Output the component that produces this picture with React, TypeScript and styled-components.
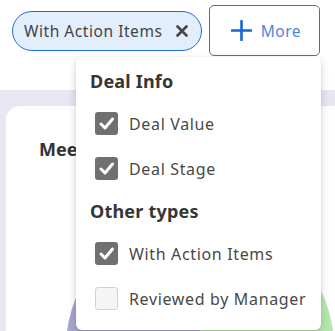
import React from "react";
import styled, { createGlobalStyle } from "styled-components";

const GlobalStyle = createGlobalStyle`
  html, body {
    margin: 0;
    padding: 0;
    background: #ffffff;
  }
  body {
    font-family: "Noto Sans", "Open Sans", sans-serif;
    color: #444444;
  }
`;

const Page = styled.div`
  position: relative;
  width: 335px;
  height: 331px;
  overflow: hidden;
  background: #ffffff;
`;

const Toolbar = styled.div`
  display: flex;
  align-items: center;
  gap: 7px;
  padding: 5px 0 0 12px;
  height: 51px;
`;

const Chip = styled.div`
  display: flex;
  align-items: center;
  height: 38px;
  padding: 0 13px 0 11px;
  border: 1px solid #1f6fd6;
  border-radius: 20px;
  background: #e3eefc;
  font-size: 15.5px;
  letter-spacing: 0.55px;
  color: #444444;
  gap: 14px;
`;

const More = styled.button`
  display: flex;
  align-items: center;
  justify-content: center;
  gap: 9px;
  width: 111px;
  height: 51px;
  padding: 0 0 0 2px;
  border: 1px solid #3272d6;
  border-radius: 5px;
  background: #ffffff;
  font-family: inherit;
  font-size: 15.5px;
  letter-spacing: 0.5px;
  color: #4d86e0;
`;

const Band = styled.div`
  margin-top: 34px;
  height: 250px;
  padding: 16px 0 0 6px;
  background: #e6e7f3;
`;

const Card = styled.div`
  position: relative;
  height: 100%;
  background: #ffffff;
  border-top-left-radius: 14px;
  padding: 31px 0 0 33px;
  overflow: hidden;
`;

const CardTitle = styled.div`
  width: 37px;
  overflow: hidden;
  white-space: nowrap;
  font-size: 18px;
  font-weight: 700;
  color: #333333;
`;

const Pie = styled.svg`
  position: absolute;
  left: 60px;
  top: 108px;
`;

const Menu = styled.div`
  position: absolute;
  left: 76px;
  top: 57px;
  width: 245px;
  height: 273px;
  box-sizing: border-box;
  padding: 12px 0 0 19px;
  background: #ffffff;
  border-radius: 6px;
  box-shadow: 0 3px 10px rgba(0, 0, 0, 0.16), 0 1px 3px rgba(0, 0, 0, 0.08);
`;

const Heading = styled.div<{ $gap: number }>`
  margin: ${(p) => p.$gap}px 0 0 -5px;
  height: 24px;
  line-height: 24px;
  font-size: 18px;
  font-weight: 700;
  letter-spacing: 0.2px;
  color: #363636;
`;

const Row = styled.label<{ $first?: boolean }>`
  display: flex;
  align-items: center;
  gap: 11px;
  height: 45px;
  margin-top: ${(p) => (p.$first ? 8 : 0)}px;
  font-size: 16px;
  letter-spacing: 0.65px;
  color: #484848;
`;

const Box = styled.span<{ $checked: boolean }>`
  display: flex;
  align-items: center;
  justify-content: center;
  width: 23px;
  height: 23px;
  box-sizing: border-box;
  border-radius: 3px;
  background: ${(p) => (p.$checked ? "#707070" : "#f5f5f5")};
  border: ${(p) => (p.$checked ? "none" : "1.5px solid #d2d2d2")};
`;

const Check = () => (
  <svg width="17" height="17" viewBox="0 0 17 17">
    <path
      d="M3 9 L7 13 L14.5 4"
      fill="none"
      stroke="#ffffff"
      strokeWidth="3"
      strokeLinecap="round"
      strokeLinejoin="round"
    />
  </svg>
);

const Cross = () => (
  <svg width="12" height="12" viewBox="0 0 12 12">
    <path
      d="M1.5 1.5 L10.5 10.5 M10.5 1.5 L1.5 10.5"
      stroke="#454545"
      strokeWidth="2.6"
      strokeLinecap="round"
    />
  </svg>
);

const Plus = () => (
  <svg width="21" height="21" viewBox="0 0 21 21">
    <path
      d="M10.5 1 V20 M1 10.5 H20"
      stroke="#1766d6"
      strokeWidth="2.6"
      strokeLinecap="round"
    />
  </svg>
);

type Item = { label: string; checked: boolean };

const groups: { title: string; items: Item[] }[] = [
  {
    title: "Deal Info",
    items: [
      { label: "Deal Value", checked: true },
      { label: "Deal Stage", checked: true },
    ],
  },
  {
    title: "Other types",
    items: [
      { label: "With Action Items", checked: true },
      { label: "Reviewed by Manager", checked: false },
    ],
  },
];

export default function App() {
  return (
    <>
      <GlobalStyle />
      <Page>
        <Toolbar>
          <Chip>
            With Action Items
            <Cross />
          </Chip>
          <More>
            <Plus />
            More
          </More>
        </Toolbar>
        <Band>
          <Card>
            <CardTitle>Meetings</CardTitle>
            <Pie width="290" height="140" viewBox="0 0 290 140">
              <path d="M134 0 A134 134 0 0 0 0 134 L134 134 Z" fill="#a7a6cd" />
              <path d="M134 0 A134 134 0 0 1 268 134 L134 134 Z" fill="#b6e6ae" />
            </Pie>
          </Card>
        </Band>
        <Menu>
          {groups.map((g, gi) => (
            <React.Fragment key={g.title}>
              <Heading $gap={gi === 0 ? 0 : 8}>{g.title}</Heading>
              {g.items.map((it, i) => (
                <Row key={it.label} $first={i === 0}>
                  <Box $checked={it.checked}>{it.checked && <Check />}</Box>
                  {it.label}
                </Row>
              ))}
            </React.Fragment>
          ))}
        </Menu>
      </Page>
    </>
  );
}
